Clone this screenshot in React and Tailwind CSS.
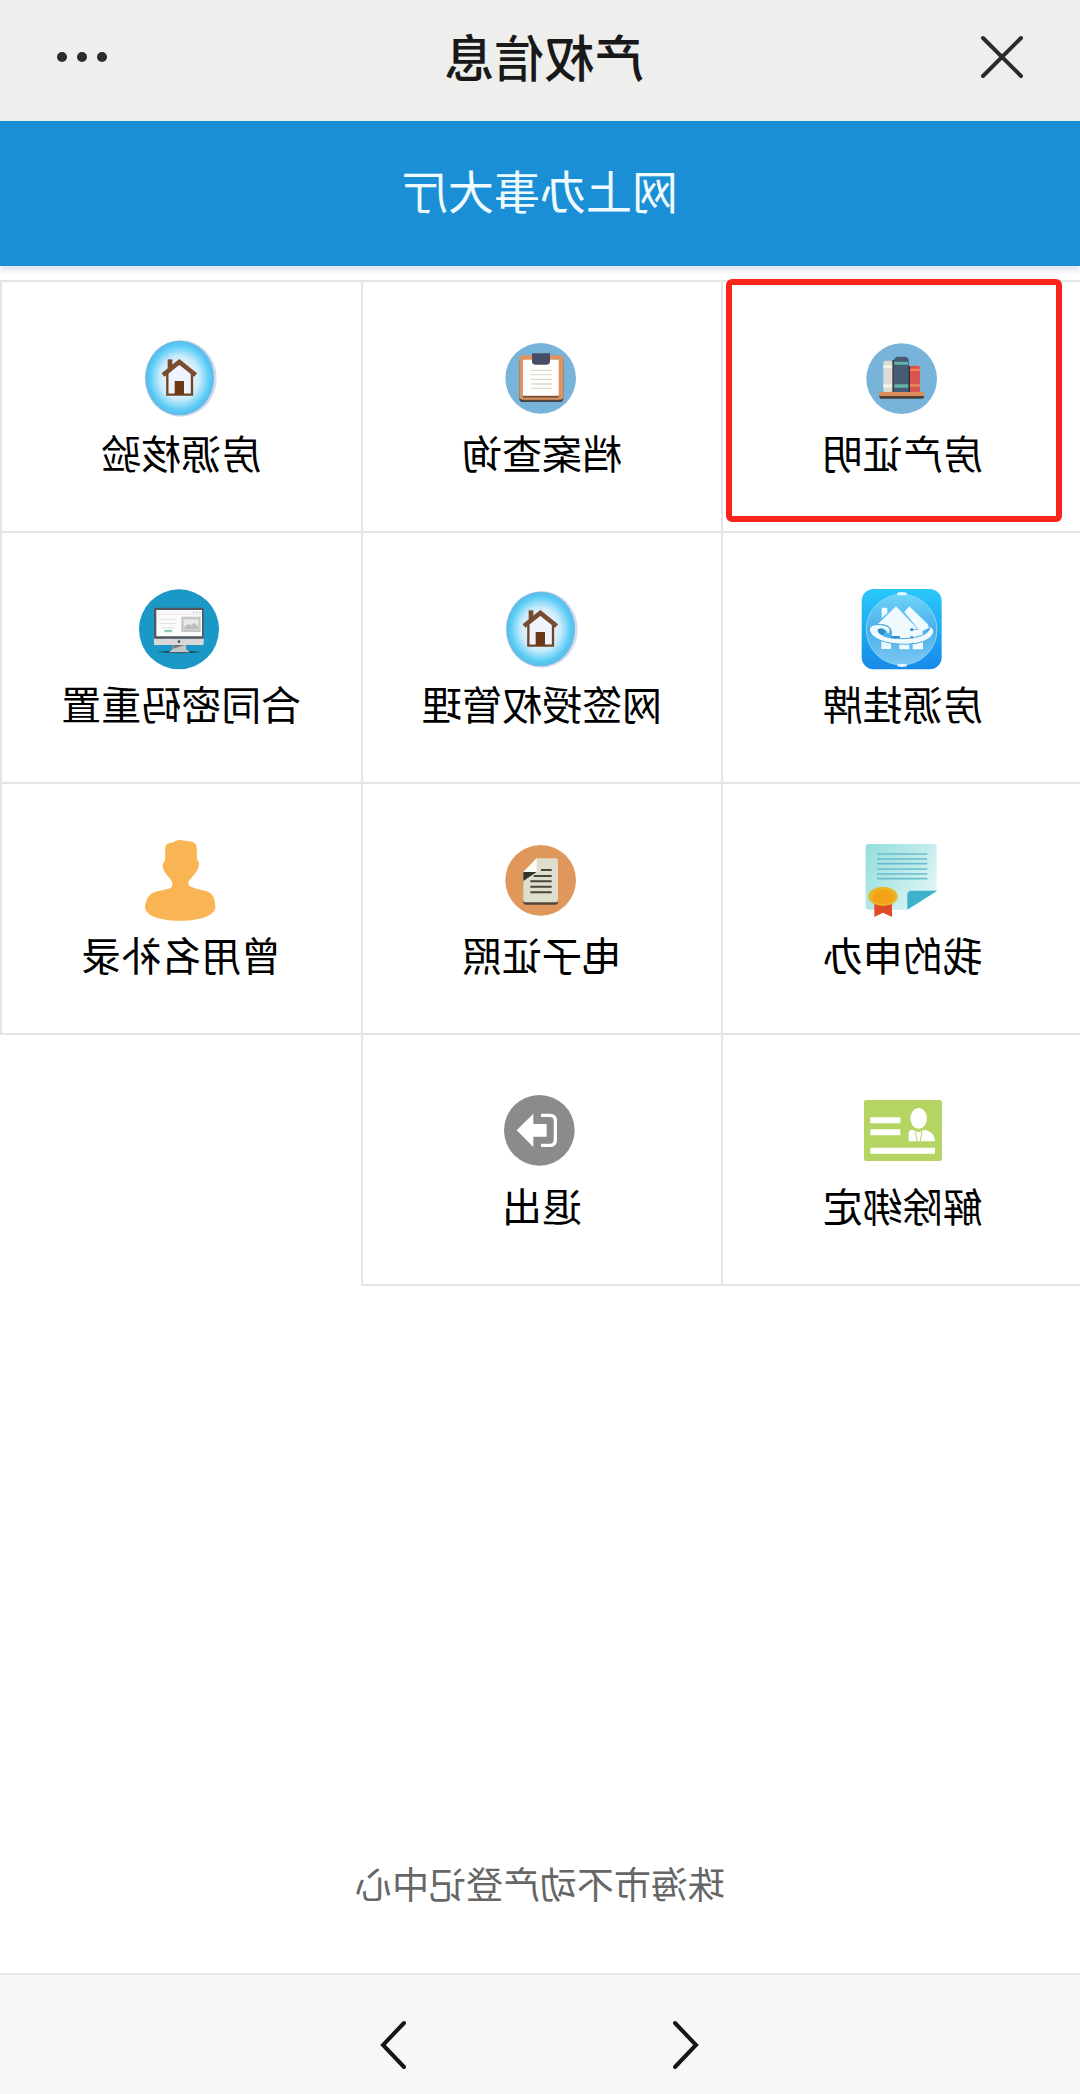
function Icon({ children }) {
  return (
    <svg viewBox="0 0 240 240" className="h-20 w-20 -scale-x-100 overflow-visible" aria-hidden="true">
      {children}
    </svg>
  );
}

function BooksIcon() {
  return (
    <Icon>
      <circle cx="116" cy="122" r="106" fill="#78b3d9" />
      <rect x="61" y="68" width="30" height="95" rx="6" fill="#dcdcd2" />
      <path d="M61 82h30v8H61zM61 139h30v9H61z" fill="#f6f4e8" />
      <path d="M88 66h6v97h-6z" fill="#3a3d44" />
      <path d="M92 74q0-18 12-18h22q12 0 12 18v89H92z" fill="#475a75" />
      <path d="M94 71h42v9H94zM94 139h42v10H94z" fill="#62b3a7" />
      <path d="M137 84h5v79h-5z" fill="#2c2d35" />
      <rect x="141" y="83" width="30" height="80" rx="6" fill="#d9534f" />
      <path d="M141 92h30v7h-30zM141 138h30v8h-30z" fill="#ee8257" />
      <path d="M49 170h134v6q0 6-6 6H55q-6 0-6-6z" fill="#4a4039" />
      <path d="M49 162h134v12H49z" fill="#dc8f57" />
    </Icon>
  );
}

function ClipboardIcon() {
  return (
    <Icon>
      <circle cx="116" cy="121" r="106" fill="#78b3d9" />
      <rect x="52" y="60" width="132" height="132" rx="10" fill="#4b4543" />
      <rect x="52" y="52" width="132" height="133" rx="10" fill="#dd945f" />
      <path d="M63 172h107v7H63z" fill="#7a5338" />
      <path d="M63 65h107v108H63z" fill="#fff" />
      <path d="M86 97h64M86 110h64M86 124h64M86 138h64M86 151h64" stroke="#dcdccf" strokeWidth="4" />
      <path d="M90 46h54v24q0 10-10 10h-34q-10 0-10-10z" fill="#454e66" />
    </Icon>
  );
}

function HouseIcon() {
  return (
    <Icon>
      <defs>
        <radialGradient id="house-glow">
          <stop offset="0.3" stopColor="#f1f6fe" />
          <stop offset="0.58" stopColor="#c9ebfb" />
          <stop offset="0.88" stopColor="#56cbf6" />
          <stop offset="1" stopColor="#63b8e2" />
        </radialGradient>
      </defs>
      <ellipse cx="119" cy="121" rx="108" ry="115" fill="#d3d9ef" />
      <ellipse cx="116" cy="120" rx="103" ry="112" fill="url(#house-glow)" />
      <path d="M80 64h14v32H80z" fill="#7a4b2e" />
      <path d="M79 104v66h74v-66L115 72z" fill="#eff3fd" stroke="#6f4527" strokeWidth="7" />
      <path d="M66 111l49-39 49 39" fill="none" stroke="#7a4b2e" strokeWidth="14" />
      <path d="M101 129h28v41h-28z" fill="#6b3915" />
    </Icon>
  );
}

function ListingIcon() {
  return (
    <Icon>
      <defs>
        <linearGradient id="listing-bg" x1="0" y1="0" x2="0" y2="1">
          <stop offset="0" stopColor="#2ac8fb" />
          <stop offset="1" stopColor="#168ae9" />
        </linearGradient>
        <linearGradient id="listing-ball" x1="0" y1="0" x2="0" y2="1">
          <stop offset="0" stopColor="#6fd4fa" />
          <stop offset="0.5" stopColor="#4baeea" />
          <stop offset="1" stopColor="#7cc8f4" />
        </linearGradient>
      </defs>
      <rect x="-4" y="0" width="240" height="241" rx="36" fill="url(#listing-bg)" />
      <circle cx="116" cy="122" r="106" fill="url(#listing-ball)" stroke="#86d5f8" strokeWidth="3" />
      <ellipse cx="117" cy="14" rx="15" ry="5" fill="#e4f7ff" />
      <ellipse cx="117" cy="229" rx="15" ry="5" fill="#e4f7ff" />
      <g fill="#effaff">
        <path d="M56 60q0-4 4-4h9q4 0 4 4v12L56 88z" />
        <path d="M99 52L44 106q30-6 42 18 4 12-2 22l26 8h38v-34h16z" />
        <path d="M124 69l15-17 64 62-24 12v28h-27v-6h-9v-26h24z" />
        <path d="M55 150h29v30H55zM109 155h30v26h-30zM149 152h31v29h-31z" />
      </g>
      <path
        d="M19 124q0-15 18-17 38-2 44 14 2 12-9 16 2-12-9-14-14 0-13 10 20 18 76 16 62-4 74-29 2-4-4-10 20 8 16 22-14 32-84 34-96-2-109-42z"
        fill="#effaff"
        stroke="#4ba9e2"
        strokeWidth="3"
      />
      <path d="M84 141h27v6H84zM142 118h8v8h-8zM142 142h8v6h-8z" fill="#318fd0" />
      <path d="M44 121q14-8 22 3 2 10-8 14-16-4-14-17z" fill="#318fd0" />
    </Icon>
  );
}

function MonitorIcon() {
  return (
    <Icon>
      <circle cx="114" cy="121" r="120" fill="#1b98c6" />
      <path d="M47 189q67-7 134 0-67 7-134 0z" fill="#173f50" />
      <path d="M96 166h38l2 16 12 8H82l12-8z" fill="#c4c5c6" />
      <path d="M97 167h37l-38 12z" fill="#77797b" />
      <rect x="39" y="148" width="149" height="20" rx="3" fill="#d9d9d9" />
      <rect x="39" y="56" width="149" height="93" rx="4" fill="#50575f" />
      <path d="M46 63h137v79H46z" fill="#fbfbfb" />
      <path d="M46 76h137" stroke="#dedede" strokeWidth="2" />
      <path d="M157 70h4M166 70h4M175 70h4" stroke="#a5a5a5" strokeWidth="3" />
      <path d="M54 92h52M54 103h52M62 116h36" stroke="#dedede" strokeWidth="3" />
      <path d="M70 126h23" stroke="#8cc8bd" strokeWidth="7" />
      <path d="M121 83h58v46h-58z" fill="#c6c6c6" />
      <path d="M128 91h44v31h-44z" fill="#e9e9e9" />
      <path d="M130 121v-8l12-8 8 4 10-8 12 12v8z" fill="#bdbdbd" />
      <circle cx="114" cy="158" r="4" fill="#555" />
    </Icon>
  );
}

function CertificateIcon() {
  return (
    <Icon>
      <defs>
        <linearGradient id="certificate-sheet" x1="0" y1="0" x2="1" y2="0.6">
          <stop offset="0" stopColor="#93dedd" />
          <stop offset="0.5" stopColor="#b6e8e8" />
          <stop offset="1" stopColor="#dcf4f5" />
        </linearGradient>
      </defs>
      <path d="M18 12h194q9 0 9 9v131l-88 57H18q-10 0-10-10V22q0-10 10-10z" fill="url(#certificate-sheet)" />
      <path d="M133 209v-44q0-13 13-13h77z" fill="#3db2cd" />
      <path d="M42 42h151M42 57h151M42 71h151M42 87h151M42 102h151M42 116h151" stroke="#69bdcc" strokeWidth="5" />
      <path d="M34 190h53v41l-27-13-26 13z" fill="#e24a27" />
      <ellipse cx="60" cy="169" rx="44" ry="29" fill="#e9b526" />
      <ellipse cx="60" cy="171" rx="32" ry="22" fill="#f3a218" />
    </Icon>
  );
}

function DocumentIcon() {
  return (
    <Icon>
      <circle cx="116" cy="121" r="106" fill="#e0975b" />
      <path d="M64 180h104v6q0 8-8 8H72q-8 0-8-8z" fill="#544538" />
      <path d="M64 95l40-40h56q8 0 8 8v116q0 8-8 8H72q-8 0-8-8z" fill="#dddecb" />
      <path d="M64 96h40l-40 27z" fill="#30302d" />
      <path d="M64 96l40-41v36q0 5-5 5z" fill="#fcfcf7" />
      <path d="M117 90h32M95 108h54M85 124h64M85 140h64M85 157h64" stroke="#4a453b" strokeWidth="6" />
    </Icon>
  );
}

function PersonIcon() {
  return (
    <Icon>
      <path
        d="M115 0c-9 0-14 5-20 8-14 0-22 4-22 16l-1 38c-8 7-8 18-4 28 4 9 10 14 15 22 7 8 11 12 11 20 0 10-5 12-14 15l-36 8c-20 5-29 22-32 45-2 24 40 42 105 42s107-18 106-42c-1-25-8-40-26-46l-35-9c-13-4-20-7-20-16 0-8 8-13 15-22 6-8 11-12 14-22 5-12 4-20-3-27l-1-32c0-14-6-21-24-22-9-1-18-4-28-4z"
        fill="#f9b453"
      />
    </Icon>
  );
}

function CardIcon() {
  return (
    <Icon>
      <rect x="3" y="27" width="234" height="183" rx="7" fill="#b4d564" />
      <path d="M22 88h90M22 124h90M22 179h194" stroke="#fff" strokeWidth="18" />
      <ellipse cx="167" cy="82" rx="25" ry="31" fill="#fff" />
      <path d="M147 116l20 8 20-8c20 7 28 16 29 35h-79v-25q0-8 10-10z" fill="#fff" />
      <path d="M157 122l5 28M177 122l-5 28" stroke="#b4d564" strokeWidth="3" />
    </Icon>
  );
}

function ExitIcon() {
  return (
    <Icon>
      <circle cx="112" cy="118" r="106" fill="#8b8b8b" />
      <path d="M44 118l50-50v31h40v38H94v31z" fill="#fff" />
      <path d="M117 73h27q16 0 16 16v58q0 16-16 16h-27" fill="none" stroke="#fff" strokeWidth="10" />
    </Icon>
  );
}

const services = [
  { label: '房产证明', icon: BooksIcon, marked: true },
  { label: '档案查询', icon: ClipboardIcon },
  { label: '房源核验', icon: HouseIcon },
  { label: '房源挂牌', icon: ListingIcon },
  { label: '网签授权管理', icon: HouseIcon },
  { label: '合同密码重置', icon: MonitorIcon },
  { label: '我的申办', icon: CertificateIcon },
  { label: '电子证照', icon: DocumentIcon },
  { label: '曾用名补录', icon: PersonIcon },
  { label: '解除绑定', icon: CardIcon },
  { label: '退出', icon: ExitIcon },
];

function ServiceCell({ label, icon: ServiceIcon, marked }) {
  return (
    <a
      href="#"
      className="relative flex h-[251px] flex-col items-center border-r-2 border-b-2 border-[#e5e5e5] pt-14 text-black"
    >
      <ServiceIcon />
      <span className="mt-2.5 text-[40px] leading-12">{label}</span>
      {marked && (
        <span className="absolute -top-[3px] right-[3px] bottom-[9px] left-5 rounded-md border-6 border-[#f9251b]" />
      )}
    </a>
  );
}

export default function App() {
  return (
    <div className="flex min-h-screen -scale-x-100 flex-col overflow-hidden bg-white font-['Noto_Sans_CJK_SC',sans-serif]">
      <header className="flex h-[121px] items-center bg-[#eeeeec] px-14 pb-2">
        <button type="button" aria-label="关闭">
          <svg viewBox="0 0 44 44" className="h-11 w-11" fill="none" stroke="#2b2b2b" strokeWidth="4" strokeLinecap="round">
            <path d="M3 3l38 38M41 3L3 41" />
          </svg>
        </button>
        <h1 className="flex-1 pb-1 text-center text-[50px] leading-15 font-medium text-[#191919]">产权信息</h1>
        <button type="button" aria-label="更多">
          <svg viewBox="0 0 52 12" className="h-3 w-[52px]" fill="#2b2b2b">
            <circle cx="6" cy="6" r="5" />
            <circle cx="26" cy="6" r="5" />
            <circle cx="46" cy="6" r="5" />
          </svg>
        </button>
      </header>

      <h2 className="flex h-[145px] items-center justify-center bg-[#1b8fd6] pb-2.5 text-[46px] leading-16 text-[#effaff] shadow-[0_5px_5px_#e4e4f2]">
        网上办事大厅
      </h2>

      <nav className="mt-3.5 -ml-0.5 grid grid-cols-3 border-t-2 border-[#e5e5e5]">
        {services.map((service) => (
          <ServiceCell key={service.label} {...service} />
        ))}
      </nav>

      <footer className="mt-auto">
        <p className="pb-[66px] text-center text-[37px] leading-12 text-[#666]">珠海市不动产登记中心</p>
        <div className="flex h-[121px] items-end justify-center gap-[267px] border-t-2 border-[#e8e8e8] bg-[#f7f7f7] pb-6">
          <button type="button" aria-label="后退">
            <svg viewBox="0 0 26 50" className="h-[50px] w-[26px]" fill="none" stroke="#161616" strokeWidth="4" strokeLinecap="round">
              <path d="M24 3L3 25l21 22" />
            </svg>
          </button>
          <button type="button" aria-label="前进">
            <svg viewBox="0 0 26 50" className="h-[50px] w-[26px]" fill="none" stroke="#161616" strokeWidth="4" strokeLinecap="round">
              <path d="M2 3l21 22L2 47" />
            </svg>
          </button>
        </div>
      </footer>
    </div>
  );
}
